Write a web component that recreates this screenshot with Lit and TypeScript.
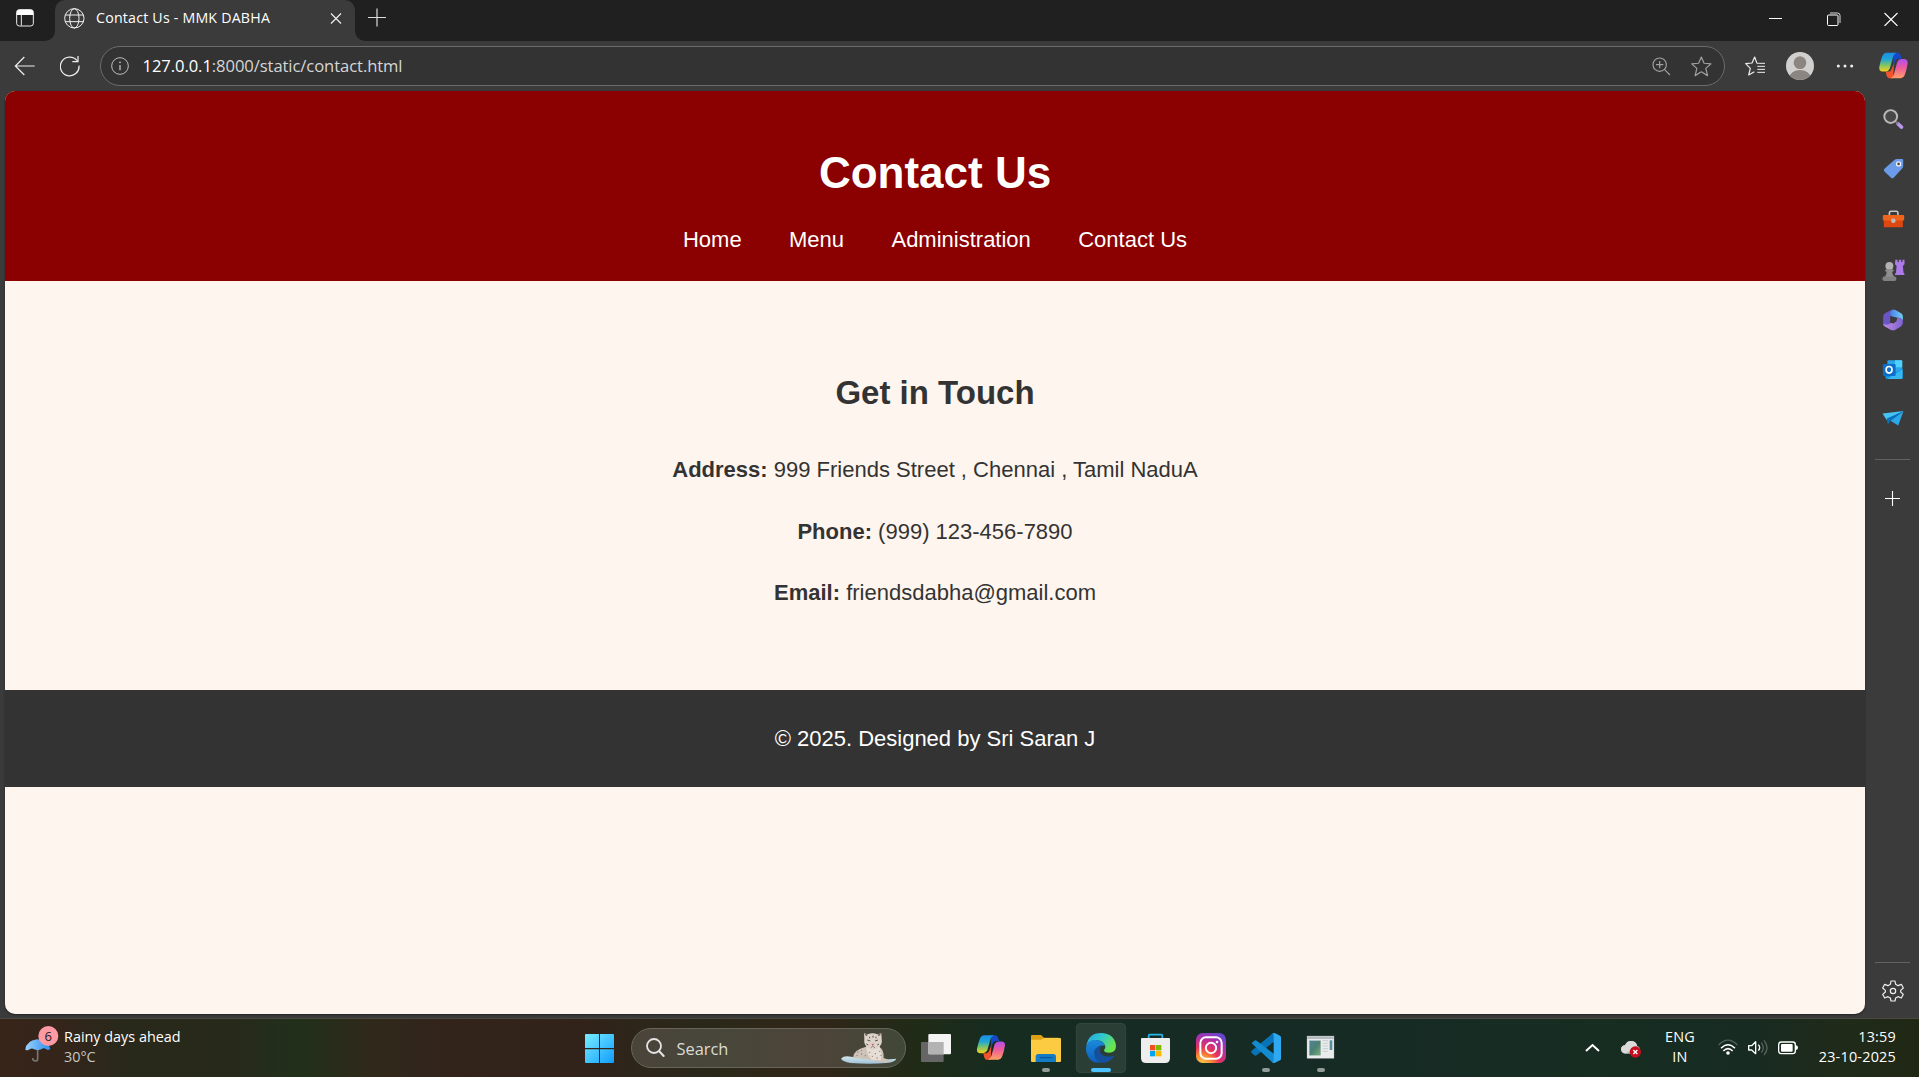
import { LitElement, html, svg, css } from "lit";
import { customElement } from "lit/decorators.js";

const icon = (w: number, h: number, box: string, body: unknown) =>
  html`<svg width=${w} height=${h} viewBox=${box} fill="none" aria-hidden="true">${body}</svg>`;

/* Copilot ribbon, shared by the toolbar and the taskbar; drawn in an 86 x 80 box. */
const copilot = (id: string) => svg`
  <defs>
    <linearGradient id="${id}a" x1="0" y1="0" x2="0" y2="1"><stop offset="0" stop-color="#1b8fe6"/><stop offset=".35" stop-color="#1fa5d8"/><stop offset=".65" stop-color="#7cc36a"/><stop offset="1" stop-color="#f7d31c"/></linearGradient>
    <linearGradient id="${id}b" x1="0" y1="0" x2="0" y2="1"><stop offset="0" stop-color="#b04ff0"/><stop offset=".45" stop-color="#ee5a9c"/><stop offset="1" stop-color="#ffa266"/></linearGradient>
  </defs>
  <path d="M44 2H57Q63 3 65 12L68 20H58Q50 20 47 29L42 46Z" fill="#1748c8"/>
  <path d="M42 78H29Q24 77 22 68L20 58H30Q36 57 38 49L44 34Z" fill="#f2552e"/>
  <path d="M21 2H52Q45 4 42 13L32 49Q28 58 20 58H10Q-1 57 1 44Q4 27 10 12Q13 3 21 2Z" fill="url(#${id}a)"/>
  <path d="M65 78H34Q41 76 44 67L54 30Q58 21 66 21H76Q86 23 85 34Q82 54 76 69Q73 77 65 78Z" fill="url(#${id}b)"/>`;

const star = "M29 3L37 21L57 23L42 36L47 57L29 46L11 57L16 36L1 23L21 21Z";

@customElement("app-root")
export class AppRoot extends LitElement {
  static styles = css`
    :host { display: block; width: 1919px; height: 1077px; overflow: hidden; background: #3b3b3b; color: #fff;
      font-family: "Open Sans", "Noto Sans", sans-serif; }
    * { box-sizing: border-box; }
    svg { display: block; flex: none; }
    .tabs { display: flex; height: 41px; background: #3b3b3b; }
    .dark { background: #202020; height: 40.5px; }
    .corner { width: 55px; border-bottom-right-radius: 10px; padding: 9px 0 0 16px; }
    .tabback { width: 300px; background: linear-gradient(#202020 20px, #3b3b3b 20px); }
    .tab { height: 41px; background: #3b3b3b; border-radius: 10px 10px 0 0; display: flex; align-items: center; padding: 0 13px 5px 9px; }
    .title { font-size: 14.2px; line-height: 20px; letter-spacing: 0.21px; margin-left: 11px; flex: 1; white-space: nowrap; }
    .rest { flex: 1; border-bottom-left-radius: 10px; display: flex; padding: 8px 21px 0 12px; justify-content: space-between; }
    .wins { display: flex; gap: 44px; padding-top: 4px; }
    .wins svg:last-child { margin-left: -1px; }
    .tools { display: flex; align-items: center; height: 50px; padding: 0 11px 0 14px; }
    .back { margin-right: 24px; }
    .reload { margin-right: 20px; }
    .address { width: 1625px; height: 40px; border: 1px solid #6c6c6c; border-radius: 20px; background: #333; display: flex; align-items: center; padding: 0 12px 0 10px; }
    .url { flex: 1; margin-left: 13.5px; font-size: 16.6px; line-height: 24px; letter-spacing: -0.08px; color: #d6d6d6; padding-bottom: 1px; }
    .url b { color: #fff; font-weight: 400; }
    .zoomicon { margin-right: 20px; }
    .fav { margin-left: 20px; }
    .avatar { margin-left: 20px; }
    .dots { margin-left: 22px; }
    .cop { margin-left: auto; padding-bottom: 1px; }
    .main { display: flex; height: 927px; padding-left: 5px; }
    .page { width: 1860px; height: 923px; border-radius: 10px; background: #fef5ef; overflow: hidden; box-shadow: 0 1px 2px #222;
      font-family: Arial, "Liberation Sans", sans-serif; font-size: 22px; text-align: center; color: #333; }
    header { background: #8b0000; color: #fff; height: 190px; padding-top: 57px; }
    h1 { margin: 0 0 30px; font-size: 44px; line-height: 49px; }
    nav { display: flex; justify-content: center; gap: 47.4px; line-height: 25px; }
    .contact { height: 409px; padding-top: 93px; }
    h2 { margin: 0 0 39px; font-size: 33px; line-height: 37px; }
    p { margin: 0 0 22px; line-height: 39.6px; }
    footer { height: 97px; padding-top: 36px; background: #333; color: #fff; line-height: 25px; }
    .side { width: 54px; display: flex; flex-direction: column; align-items: center; padding-top: 3px; }
    .slot { height: 50.2px; width: 54px; padding-left: 2px; display: flex; align-items: center; justify-content: center; }
    .line { width: 35px; height: 1px; background: #626262; }
    .l1 { margin-top: 14px; }
    .plus { margin-top: 31px; }
    .l2 { margin-top: auto; }
    .gear { margin: 17px 0 16px; padding-left: 2px; }
    .bar { height: 59px; border-top: 1px solid #4a4a3e; display: flex;
      background: linear-gradient(90deg, #38251a 0, #34241a 60px, #29291b 120px, #27291b 230px, #21301b 300px, #30291b 370px, #32241b 440px, #31231a 580px, #2a281a 700px, #302619 820px, #202b17 920px, #172c1f 985px, #152b24 1130px, #172b25 1400px, #172d21 1600px, #172b22 1740px, #202a19 1850px, #202815 1919px); }
    .weather { width: 577px; padding: 6px 0 0 25px; display: flex; }
    .lines { font-size: 14.4px; line-height: 20px; white-space: nowrap; padding-top: 2px; }
    .wtext { margin-left: 5px; }
    .dim { color: #c7c5c1; }
    .start { padding: 15px 0 0 8px; width: 54px; }
    .search { width: 275px; height: 40px; margin-top: 9px; border: 1px solid #666558; border-radius: 20px; background: #ffffff24; display: flex; align-items: center; padding-left: 14px; }
    .stext { flex: 1; margin-left: 11.5px; font-size: 16.4px; color: #dcdcd6; }
    .cat { margin-right: 8px; }
    .apps { display: flex; margin-left: 2px; }
    .tray { flex: 1; display: flex; padding: 6px 23px 0 0; margin-left: 236px; }
    .tray svg { margin-top: 13px; }
    .lang { width: 36px; text-align: center; margin-left: 20px; letter-spacing: 0.2px; }
    .s1 { margin-left: 20px; }
    .s2 { margin-left: 20px; }
    .clock { margin-left: auto; text-align: right; letter-spacing: 0.22px; }
  `;

  tabStrip() {
    return html`<div class="tabs">
      <div class="dark corner">${icon(19, 19, "0 0 57 57", svg`<rect x="2" y="2" width="50" height="49" rx="8" stroke="#eee" stroke-width="3"/><path d="M2 18V9Q2 2 9 2H45Q52 2 52 9V18Z" fill="#fff"/><path d="M16 18V50" stroke="#eee" stroke-width="3"/>`)}</div>
      <div class="tabback"><div class="tab">
        ${icon(21, 21, "0 0 63 63", svg`<g stroke="#f2f2f2" stroke-width="3"><circle cx="31" cy="31" r="29"/><ellipse cx="31" cy="31" rx="14" ry="29"/><path d="M4 21H58M4 41H58"/></g>`)}
        <span class="title">Contact Us - MMK DABHA</span>
        ${icon(12, 12, "0 0 12 12", svg`<path d="M1 1.5L11 11.5M11 1.5L1 11.5" stroke="#eee" stroke-width="1.2"/>`)}
      </div></div>
      <div class="dark rest">
        ${icon(19, 19, "0 0 19 19", svg`<path d="M1 9.5H19M10 .5V18.5" stroke="#ddd" stroke-width="1.2"/>`)}
        <div class="wins">
          ${icon(14, 14, "0 0 14 14", svg`<path d="M0 6.5H13" stroke="#fff"/>`)}
          ${icon(14, 14, "0 0 14 14", svg`<rect x=".5" y="3" width="10.5" height="10.5" rx="1" stroke="#fff"/><path d="M3 1H10.5Q13 1 13 3.5V11" stroke="#ddd"/>`)}
          ${icon(14, 14, "0 0 14 14", svg`<path d="M.5 1L13.5 14M13.5 1L.5 14" stroke="#fff" stroke-width="1.1"/>`)}
        </div>
      </div>
    </div>`;
  }

  toolbar() {
    return html`<div class="tools">
      <span class="back">${icon(22, 20, "0 0 66 60", svg`<path d="M62 30H5M31 3L4 30L31 57" stroke="#eee" stroke-width="3.6"/>`)}</span>
      <span class="reload">${icon(20, 22, "0 0 60 66", svg`<path d="M57 32A28 28 0 1 1 51 17M54 3V20H37" stroke="#eee" stroke-width="3.8"/>`)}</span>
      <div class="address">
        ${icon(18, 18, "0 0 54 54", svg`<circle cx="27" cy="27" r="25" stroke="#bdbdbd" stroke-width="3"/><path d="M27 24V40" stroke="#bdbdbd" stroke-width="4"/><circle cx="27" cy="16" r="2.7" fill="#bdbdbd"/>`)}
        <span class="url"><b>127.0.0.1</b>:8000/static/contact.html</span>
        <span class="zoomicon">${icon(19, 19, "0 0 57 57", svg`<g stroke="#a0a0a0" stroke-width="3.5"><circle cx="23" cy="23" r="20"/><path d="M37 37L54 54M12 23H34M23 12V34"/></g>`)}</span>
        ${icon(21, 21, "-1 0 61 61", svg`<path d=${star} stroke="#a0a0a0" stroke-width="3.5" stroke-linejoin="round"/>`)}
      </div>
      <span class="fav">${icon(21, 21, "0 0 63 63", svg`<path d="M36 22L29 3L21 21L2 23L16 37L11 57L28 47" stroke="#eee" stroke-width="3.6" stroke-linejoin="round"/><path d="M36 22H40L60 22M37 31H60M37 40H60M37 49H60" stroke="#eee" stroke-width="3"/>`)}</span>
      <span class="avatar">${icon(28, 28, "0 0 84 84", svg`<defs><clipPath id="av"><circle cx="42" cy="42" r="42"/></clipPath></defs><g clip-path="url(#av)"><rect width="84" height="84" fill="#d2d0ce"/><circle cx="42" cy="32" r="19" fill="#8b8682"/><ellipse cx="42" cy="78" rx="32" ry="24" fill="#8b8682"/></g>`)}</span>
      <span class="dots">${icon(18, 6, "0 0 54 18", svg`<g fill="#eee"><circle cx="7" cy="9" r="4.5"/><circle cx="27" cy="9" r="4.5"/><circle cx="47" cy="9" r="4.5"/></g>`)}</span>
      <span class="cop">${icon(29, 27, "0 0 86 80", copilot("t"))}</span>
    </div>`;
  }

  sidebar() {
    const items = [
      svg`<path d="M47 47L58 57" stroke="#b995ee" stroke-width="11" stroke-linecap="round"/><path d="M41 41L47 47" stroke="#777" stroke-width="6"/><circle cx="25" cy="25" r="19.5" stroke="#b9b9b9" stroke-width="6" fill="#484848"/>`,
      svg`<path d="M36 5Q39 2 45 2H60Q63 2 63 5V23Q63 28 59 32L34 59Q30 63 26 59L6 40Q2 36 6 32Z" fill="#6c9ce9"/><circle cx="49" cy="17" r="8" fill="#f4f4f4"/><circle cx="49" cy="17" r="4" fill="#444"/>`,
      svg`<path d="M21 21V14Q21 9 26 9H42Q47 9 47 14V21" stroke="#c5c5c5" stroke-width="5"/><rect x="4" y="28" width="58" height="30" rx="3" fill="#dc480f"/><rect x="1" y="20" width="65" height="17" rx="3" fill="#ef651e"/><circle cx="33" cy="38" r="7" fill="#bcbcbc"/>`,
      svg`<path d="M39 1H46V8H50V1H57V8H61V1H67V15L62 20L64 41Q68 43 67 48H38Q37 43 41 41L43 20L38 15Z" fill="#ad7be9"/><circle cx="21" cy="20" r="12" fill="#b2b2b2"/><path d="M8 34Q8 30 13 30H29Q34 30 34 34Q34 38 29 38Q30 48 38 55H5Q13 47 13 38Q8 38 8 34Z" fill="#8e8e8e"/><rect x="0" y="52" width="42" height="14" rx="5" fill="#818181"/>`,
      svg`<defs><linearGradient id="mb"><stop stop-color="#4a7de8"/><stop offset="1" stop-color="#70cff0"/></linearGradient><linearGradient id="mp"><stop stop-color="#c08be2"/><stop offset="1" stop-color="#7d62d2"/></linearGradient></defs><path d="M2 20Q3 15 8 12L25 3Q29 0 33 1Q22 10 24 22V42L12 54Q2 50 2 40Z" fill="#6b55c4"/><path d="M24 20Q20 8 31 1H38L57 12Q62 16 62 22V34Q57 25 43 26Z" fill="url(#mb)"/><path d="M62 24V42Q62 48 56 52L38 63Q32 66 26 63L7 52Q2 49 2 43Q10 50 20 45L38 35Q50 28 43 24Q58 25 62 34Z" fill="url(#mp)"/><path d="M24 22L43 26V36L33 43L24 40Z" fill="#3b3b3b"/>`,
      svg`<rect x="15" y="3" width="45" height="45" rx="3" fill="#2aa7e8"/><path d="M38 3H57Q60 3 60 6V24H38Z" fill="#50d2ff"/><path d="M10 28L35 43L61 28V57Q61 60 57 60H14Q9 60 9 56Z" fill="#1490df"/><path d="M61 30V57Q61 60 57 60H14L58 32Z" fill="#35b8f1"/><rect x="1" y="14" width="39" height="37" rx="4" fill="#0b6fc9"/><ellipse cx="20" cy="32" rx="9" ry="10" stroke="#fff" stroke-width="5"/>`,
      svg`<path d="M0 13L64 5L13 33Z" fill="#45c4f2"/><path d="M64 5L48 49L24 35Z" fill="#2aa8ea"/><path d="M13 28L64 5L24 35L16 47Z" fill="#0871bc"/>`,
    ];
    return html`<div class="side">
      ${items.map((b) => html`<div class="slot">${icon(23, 22, "-1 -1 69 67", b)}</div>`)}
      <div class="line l1"></div>
      <div class="plus">${icon(15, 15, "0 0 15 15", svg`<path d="M0 7.5H15M7.5 0V15" stroke="#fff" stroke-width="1.1"/>`)}</div>
      <div class="line l2"></div>
      <div class="gear">${icon(22, 22, "0 0 66 66", svg`<g stroke="#eee" stroke-width="3.6" stroke-linejoin="round"><circle cx="33" cy="33" r="8"/><path d="M27 3H39L41 13L48 17L58 13L64 24L56 31V36L64 43L58 54L48 50L41 54L39 63H27L25 54L18 50L8 54L2 43L10 36V31L2 24L8 13L18 17L25 13Z"/></g>`)}</div>
    </div>`;
  }

  taskbar() {
    /* Each app drawing shares one strip, 165 units per slot. */
    const apps = [
      svg`<rect x="63" y="126" width="68" height="60" rx="3" fill="#666"/><rect x="85" y="102" width="68" height="61" rx="3" fill="#f4f4f4"/><path d="M85 126H131V163H88Q85 163 85 160Z" fill="#b3b3b3"/>`,
      svg`<g transform="translate(230 104) scale(1 .96)">${copilot("b")}</g>`,
      svg`<path d="M393 108Q393 105 396 105H423L432 113H476V130H393Z" fill="#dda014"/><path d="M393 119H424L432 114H480Q483 114 483 117V183Q483 186 480 186H396Q393 186 393 183Z" fill="#fdcb41"/><path d="M407 186V170Q407 162 415 162H460Q468 162 468 170V186Z" fill="#147cc7"/><path d="M419 173H458" stroke="#0b4d88" stroke-width="3"/><rect x="426" y="204" width="24" height="12" rx="6" fill="#929b97"/>`,
      svg`<defs><linearGradient id="eg" x1="0" y1="0" x2="1" y2=".5"><stop stop-color="#25a6e0"/><stop offset=".5" stop-color="#30c7cf"/><stop offset="1" stop-color="#6be54b"/></linearGradient><linearGradient id="eb" x1="0" y1="0" x2="0" y2="1"><stop stop-color="#1b8bdc"/><stop offset="1" stop-color="#0d5db9"/></linearGradient></defs><rect x="529" y="70" width="148" height="148" rx="13" fill="#ffffff17" stroke="#ffffff20" stroke-width="2"/><path d="M559 138Q565 99 603 99Q644 101 648 137Q648 158 627 158Q612 158 612 150Q617 145 616 139Q610 119 587 121Q568 122 559 138Z" fill="url(#eg)"/><path d="M558 143Q560 120 585 120Q609 121 615 137Q594 135 590 151Q588 173 616 184Q575 199 561 163Q557 154 558 143Z" fill="url(#eb)"/><path d="M604 136Q581 143 582 160Q585 190 614 188Q629 185 641 171Q642 166 637 168Q619 173 606 164Q594 155 604 136Z" fill="#15509e"/><rect x="573" y="204" width="60" height="12" rx="6" fill="#4cc2ff"/>`,
      svg`<path d="M746 119V107Q746 104 749 104H784Q787 104 787 107V119" stroke="#27b7ec" stroke-width="5"/><path d="M723 117Q723 114 726 114H807Q810 114 810 117V174Q810 189 795 189H738Q723 189 723 174Z" fill="#eee"/><rect x="750" y="135" width="16" height="16" fill="#f25022"/><rect x="768" y="135" width="16" height="16" fill="#7fba00"/><rect x="750" y="153" width="16" height="16" fill="#00a4ef"/><rect x="768" y="153" width="16" height="16" fill="#ffb900"/>`,
      svg`<defs><radialGradient id="ig" cx=".2" cy="1.05" r="1.15"><stop stop-color="#ffd050"/><stop offset=".28" stop-color="#fb8a32"/><stop offset=".5" stop-color="#e7325c"/><stop offset=".78" stop-color="#b02fa8"/><stop offset="1" stop-color="#6844d0"/></radialGradient></defs><rect x="888" y="99" width="90" height="90" rx="20" fill="url(#ig)"/><rect x="901" y="112" width="64" height="64" rx="17" stroke="#fff" stroke-width="6"/><circle cx="933" cy="144" r="15.5" stroke="#fff" stroke-width="6"/><circle cx="951" cy="126" r="4" fill="#fff"/>`,
      svg`<path d="M1118 100L1136 107V134L1119 127L1070 166Q1066 168 1063 166L1054 158V153Z" fill="#0873b8"/><path d="M1055 130L1063 122Q1066 120 1070 122L1121 161L1136 155V181L1118 188Z" fill="#138bd0"/><path d="M1118 100Q1122 98 1126 100L1140 107Q1143 109 1143 113V176Q1143 179 1140 181L1125 188Q1121 190 1117 187Q1121 186 1121 181V107Q1121 102 1118 100Z" fill="#2da8f1"/><rect x="1086" y="204" width="24" height="12" rx="6" fill="#929b97"/>`,
      svg`<defs><linearGradient id="ap" x1="0" y1="0" x2="1" y2="1"><stop stop-color="#4f8599"/><stop offset=".5" stop-color="#4c8173"/><stop offset="1" stop-color="#78ae80"/></linearGradient></defs><rect x="1221" y="108" width="81" height="67" fill="#e9ebec" stroke="#aaa"/><rect x="1222" y="109" width="79" height="8" fill="#b5bbc1"/><rect x="1228" y="122" width="34" height="44" fill="url(#ap)" stroke="#a5acad"/><path d="M1268 122H1284M1268 130H1284M1268 138H1284M1268 146H1284M1268 154H1284" stroke="#c8cdd0" stroke-width="3"/><rect x="1289" y="121" width="8" height="29" fill="#5b8d9d"/><rect x="1251" y="204" width="24" height="12" rx="6" fill="#929b97"/>`,
    ];
    return html`<div class="bar">
      <div class="weather">
        ${icon(34, 38, "76 255 102 114", svg`<defs><linearGradient id="um"><stop stop-color="#9dd1fb"/><stop offset="1" stop-color="#298df0"/></linearGradient></defs><path d="M114 322V357Q114 363 107 363Q99 363 99 354" stroke="#777570" stroke-width="5"/><path d="M77 329Q80 302 112 298Q148 302 152 327Q145 333 139 327Q132 322 125 328Q114 333 103 328Q97 323 90 328Q83 333 77 329Z" fill="url(#um)"/><circle cx="146" cy="288" r="30" fill="#ff99a4"/><text x="146" y="302" font-size="39" text-anchor="middle" fill="#221c1c">6</text>`)}
        <div class="lines wtext"><div>Rainy days ahead</div><div class="dim">30°C</div></div>
      </div>
      <div class="start">${icon(29, 29, "0 0 29 29", svg`<defs><linearGradient id="wn" x1="0" y1="0" x2="29" y2="29" gradientUnits="userSpaceOnUse"><stop stop-color="#78edff"/><stop offset="1" stop-color="#109dff"/></linearGradient></defs><path d="M0 1Q0 0 1 0H14V14H0ZM15 0H28Q29 0 29 1V14H15ZM0 15.2H14V29H1Q0 29 0 28ZM15 15.2H29V28Q29 29 28 29H15Z" fill="url(#wn)"/>`)}</div>
      <div class="search">
        ${icon(19, 20, "0 0 57 60", svg`<circle cx="24" cy="24" r="21" stroke="#e4e4e4" stroke-width="5.5"/><path d="M39 39L53 54" stroke="#e4e4e4" stroke-width="6" stroke-linecap="round"/>`)}
        <span class="stext">Search</span>
        <span class="cat">${icon(56, 32, "842 100 168 96", svg`<defs><linearGradient id="ice" x1="0" y1="0" x2="0" y2="1"><stop stop-color="#d6e6ee"/><stop offset="1" stop-color="#9cc0d6"/></linearGradient></defs><path d="M842 180Q850 170 872 174L930 181Q975 184 1008 180Q1005 190 978 193Q930 198 870 193Q848 189 842 180Z" fill="url(#ice)"/><path d="M878 177Q880 153 915 145H958Q972 155 970 178Q990 184 988 190Q960 192 942 186L915 181Z" fill="#cfc3b7"/><path d="M918 142Q935 156 956 142Q966 160 962 184L935 184Q918 168 918 142Z" fill="#e6ded6"/><path d="M911 104L922 107Q937 101 951 107L963 104L964 119Q968 141 950 150Q937 156 925 150Q909 141 912 119Z" fill="#ddd3ca"/><path d="M914 107L921 110M960 107L953 110" stroke="#625851" stroke-width="4"/><path d="M921 124L930 127M953 124L944 127M928 114V119M938 111V117M947 114V119M918 136L924 139M956 136L951 139" stroke="#5f5650" stroke-width="3"/><path d="M933 135H942L937 143Z" fill="#d46b79"/><path d="M931 147L937 143L944 147" stroke="#6c5a52" stroke-width="2"/><g fill="#8c7d72"><circle cx="893" cy="160" r="2"/><circle cx="903" cy="155" r="2"/><circle cx="904" cy="166" r="2"/><circle cx="890" cy="170" r="2"/><circle cx="915" cy="171" r="2"/><circle cx="928" cy="161" r="2"/><circle cx="945" cy="165" r="2"/><circle cx="958" cy="158" r="2"/><circle cx="962" cy="170" r="2"/><circle cx="936" cy="173" r="2"/><circle cx="950" cy="178" r="2"/></g>`)}</span>
      </div>
      <div class="apps">${apps.map((b, i) => icon(55, 58, `${24 + 165 * i} 57 165 174`, b))}</div>
      <div class="tray">
        ${icon(16, 20, "0 0 16 20", svg`<path d="M2 13L8.5 7L15 13" stroke="#fff" stroke-width="2"/>`)}
        <div class="s1">${icon(22, 20, "186 295 66 60", svg`<path d="M203 342Q188 340 189 327Q191 318 201 317Q207 302 222 304Q235 306 237 318Q247 321 246 333Q244 342 234 342Z" fill="#bababa"/><path d="M201 317Q207 302 222 304Q234 306 237 318L205 341Q190 341 189 327Q191 318 201 317Z" fill="#dadada"/><circle cx="232" cy="337" r="17" fill="#c50f1f"/><path d="M226 331L238 343M238 331L226 343" stroke="#fff" stroke-width="4"/>`)}</div>
        <div class="lines lang"><div>ENG</div><div>IN</div></div>
        <div class="s2">${icon(82, 20, "474 295 246 60", svg`
          <path d="M476 316Q504 287 532 316" stroke="#53635b" stroke-width="4"/><path d="M483 326Q504 304 525 326M490 334Q504 320 518 334" stroke="#fff" stroke-width="4.5"/><circle cx="504" cy="340" r="5.5" fill="#fff"/>
          <path d="M566 318H575L587 306V342L575 331H566Z" stroke="#fff" stroke-width="4" stroke-linejoin="round"/><path d="M595 315Q603 324 595 333" stroke="#fff" stroke-width="4"/><path d="M604 309Q616 324 604 339M612 302Q630 324 612 346" stroke="#53635b" stroke-width="4"/>
          <rect x="656" y="307" width="50" height="35" rx="8" stroke="#fff" stroke-width="4"/><rect x="663" y="313" width="35" height="23" rx="3" fill="#fff"/><path d="M708 317Q714 318 714 324Q714 330 708 331Z" fill="#fff"/>`)}</div>
        <div class="lines clock"><div>13:59</div><div>23-10-2025</div></div>
      </div>
    </div>`;
  }

  render() {
    return html`
      ${this.tabStrip()} ${this.toolbar()}
      <div class="main">
        <div class="page">
          <header>
            <h1>Contact Us</h1>
            <nav><span>Home</span><span>Menu</span><span>Administration</span><span>Contact Us</span></nav>
          </header>
          <section class="contact">
            <h2>Get in Touch</h2>
            <p><b>Address:</b> 999 Friends Street , Chennai , Tamil NaduA</p>
            <p><b>Phone:</b> (999) 123-456-7890</p>
            <p><b>Email:</b> friendsdabha@gmail.com</p>
          </section>
          <footer>© 2025. Designed by Sri Saran J</footer>
        </div>
        ${this.sidebar()}
      </div>
      ${this.taskbar()}
    `;
  }
}
